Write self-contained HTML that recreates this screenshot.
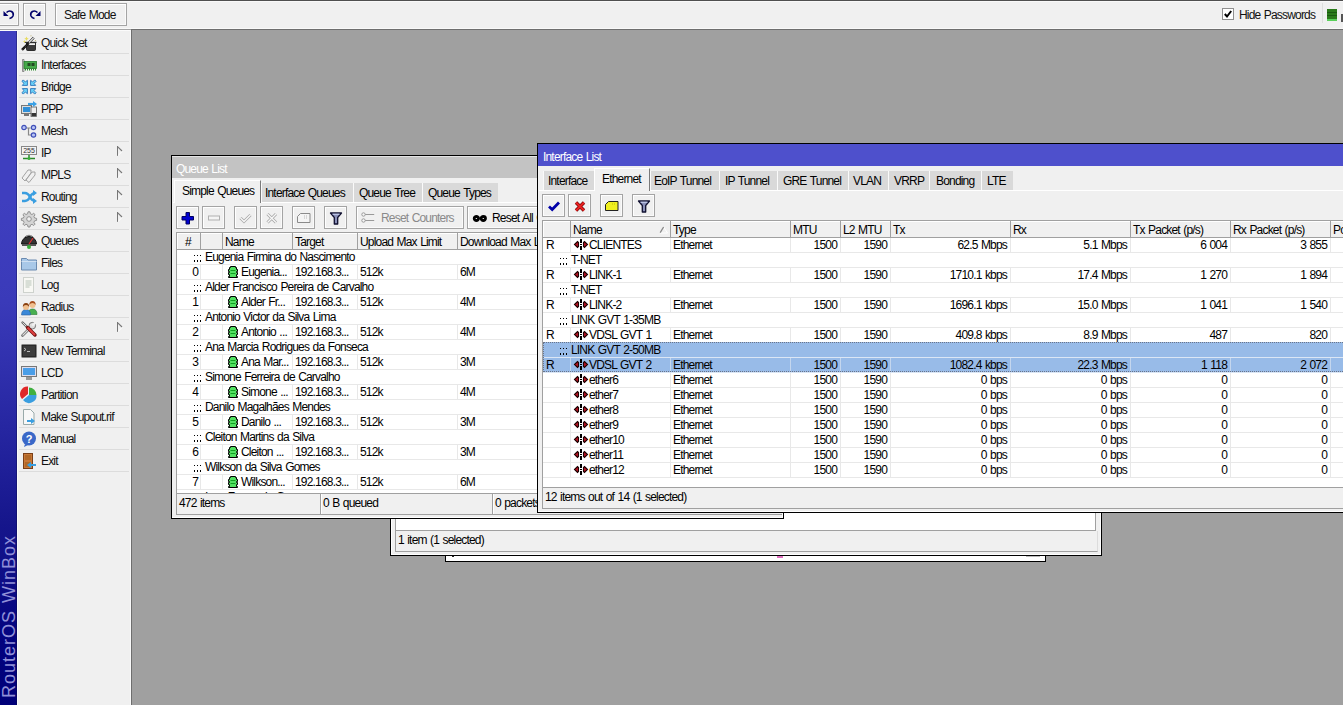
<!DOCTYPE html><html><head><meta charset="utf-8"><style>
*{margin:0;padding:0;box-sizing:border-box}
html,body{width:1343px;height:705px;overflow:hidden;background:#a0a0a0;position:relative}
body>div,body>span,body>svg,.w>div,.w>span,.w>svg{position:absolute}
.t{position:absolute;font-family:"Liberation Sans",sans-serif;font-size:12px;letter-spacing:-0.82px;word-spacing:0.9px;line-height:14px;white-space:nowrap;color:#000}
svg{position:absolute;overflow:visible}
</style></head><body><div style="left:0px;top:0px;width:1343px;height:30px;background:#f0f0f0;border-top:1px solid #4f4f4f;"></div>
<div style="left:0px;top:1px;width:1343px;height:1px;background:#f9f9f9"></div>
<div style="left:0px;top:28px;width:1343px;height:1px;background:#f9f9f9"></div>
<div style="left:0px;top:29px;width:131px;height:1px;background:#a5a5a5"></div>
<div style="left:131px;top:29px;width:1212px;height:1px;background:#6e6e6e"></div>
<div style="left:-4px;top:3px;width:23px;height:23px;border:1px solid #a4a4a4;background:#f0f0f0;box-shadow:inset 1px 1px 0 #fff,inset -1px -1px 0 #fafafa;"></div>
<div style="left:23px;top:3px;width:23px;height:23px;border:1px solid #a4a4a4;background:#f0f0f0;box-shadow:inset 1px 1px 0 #fff,inset -1px -1px 0 #fafafa;"></div>
<div style="left:55px;top:3px;width:72px;height:23px;border:1px solid #a4a4a4;background:#f0f0f0;box-shadow:inset 1px 1px 0 #fff,inset -1px -1px 0 #fafafa;"></div>
<svg style="left:3px;top:9px" width="12" height="11" viewBox="0 0 12 11"><path d="M3.5 3.5 Q6 1.2 8.6 2.5 Q11 4 10 7 Q9 9 6.5 9.5" fill="none" stroke="#00006a" stroke-width="1.6"/><path d="M0.5 2 L5.5 7 L0.5 7 Z" fill="#00006a"/></svg>
<svg style="left:29px;top:9px" width="12" height="11" viewBox="0 0 12 11"><path d="M8.5 3.5 Q6 1.2 3.4 2.5 Q1 4 2 7 Q3 9 5.5 9.5" fill="none" stroke="#00006a" stroke-width="1.6"/><path d="M11.5 2 L6.5 7 L11.5 7 Z" fill="#00006a"/></svg>
<span class="t" style="left:64px;top:8px;color:#111">Safe Mode</span>
<div style="left:1222px;top:8px;width:12px;height:12px;border:1px solid #8f8f8f;background:#fff"></div>
<svg style="left:1224px;top:10px" width="8" height="8" viewBox="0 0 8 8"><path d="M0.8 4 L3 6.5 L7.2 1" fill="none" stroke="#000" stroke-width="2"/></svg>
<span class="t" style="left:1239px;top:8px;color:#111">Hide Passwords</span>
<div style="left:1322px;top:3px;width:1px;height:20px;background:#dedede"></div>
<div style="left:1327px;top:9px;width:10px;height:12px;background:#2a7a1a;border-bottom:2px solid #5ad05a"></div>
<div style="left:1327px;top:12px;width:10px;height:1px;background:#1a5a10"></div>
<div style="left:1327px;top:15px;width:10px;height:1px;background:#1a5a10"></div>
<div style="left:1341px;top:14px;width:2px;height:8px;background:#555"></div>
<div style="left:0px;top:31px;width:17px;height:674px;background:linear-gradient(to bottom,#3f3fbf 0px,#3f3fbf 169px,#3a3ab9 271px,#2f2fac 341px,#22229c 421px,#16168c 491px,#03037f 610px,#000078 674px);"></div>
<div style="left:16px;top:31px;width:1px;height:674px;background:rgba(10,10,60,0.35)"></div>
<span class="t" style="left:-72.5px;top:608px;width:162px;height:18px;font-size:18px;line-height:18px;letter-spacing:1px;color:#9090d8;transform:rotate(-90deg);transform-origin:center">RouterOS WinBox</span>
<div style="left:0px;top:30px;width:131px;height:1px;background:#fbfbfb"></div>
<div style="left:17px;top:31px;width:115px;height:674px;background:#f0f0f0;border-left:1px solid #fafafa;border-right:1px solid #6e6e6e;"></div>
<div style="left:131px;top:30px;width:1px;height:1px;background:#6e6e6e"></div>
<div style="left:130px;top:30px;width:1px;height:675px;background:#f9f9f9"></div>
<svg style="left:21px;top:35px" width="16" height="16" viewBox="0 0 16 16"><path d="M5.5 8 h9 v6.5 q0 1 -1 1 h-7 q-1 0 -1 -1z" fill="#3a3a3a" stroke="#111" stroke-width="0.8"/><rect x="6" y="8.2" width="8" height="1.8" fill="#f2f2f2"/><rect x="3.5" y="6.8" width="12" height="1.1" fill="#222"/><path d="M1 14.8 L7.8 8" stroke="#111" stroke-width="2.4"/><path d="M1 14.8 L7.8 8" stroke="#777" stroke-width="0.6" stroke-dasharray="1 1"/><path d="M8 7.5 L12.8 2.7" stroke="#222" stroke-width="2.4"/><path d="M8 7.5 L12.8 2.7" stroke="#f4f4f4" stroke-width="1.1"/><path d="M5.5 1.5 l0.7 1.5 1.5 0.7 -1.5 0.7 -0.7 1.5 -0.7 -1.5 -1.5 -0.7 1.5 -0.7z" fill="#e8dc60"/><path d="M3.5 5 l0.5 1.1 1.1 0.5 -1.1 0.5 -0.5 1.1 -0.5 -1.1 -1.1 -0.5 1.1 -0.5z" fill="#e8dc60"/><circle cx="10" cy="0.8" r="0.6" fill="#b8b070"/><circle cx="14.5" cy="5.5" r="0.6" fill="#b8b070"/></svg>
<span class="t" style="left:41px;top:36px;color:#111">Quick Set</span>
<div style="left:19px;top:53px;width:110px;height:1px;background:#dcdcdc"></div>
<svg style="left:21px;top:57px" width="16" height="16" viewBox="0 0 16 16"><path d="M1.5 2.5 h1.5 v12 h-1.5z" fill="#d8d8d8" stroke="#7a7a7a" stroke-width="0.8"/><rect x="3" y="4.5" width="12.5" height="7" fill="#46aa4a" stroke="#247a2a" stroke-width="0.8"/><rect x="6.5" y="6" width="3" height="3" fill="#234a23"/><rect x="10.5" y="6" width="3" height="3" fill="#234a23"/><path d="M4.5 11.5 v2 M6.5 11.5 v2 M8.5 11.5 v2 M10.5 11.5 v2 M12.5 11.5 v2 M14.5 11.5 v2" stroke="#2a8a2a" stroke-width="1"/></svg>
<span class="t" style="left:41px;top:58px;color:#111">Interfaces</span>
<div style="left:19px;top:75px;width:110px;height:1px;background:#dcdcdc"></div>
<svg style="left:21px;top:79px" width="16" height="16" viewBox="0 0 16 16"><g id="ba" fill="#6cd4fa" stroke="#2a72b8" stroke-width="0.9" stroke-linejoin="miter"><path d="M0.9 2.3 L2.3 0.9 L4.4 3 L6.4 1.3 V6.4 H1.3 L3 4.4 Z"/></g><use href="#ba" transform="translate(16,0) scale(-1,1)"/><use href="#ba" transform="translate(0,16) scale(1,-1)"/><use href="#ba" transform="translate(16,16) scale(-1,-1)"/></svg>
<span class="t" style="left:41px;top:80px;color:#111">Bridge</span>
<div style="left:19px;top:97px;width:110px;height:1px;background:#dcdcdc"></div>
<svg style="left:21px;top:101px" width="16" height="16" viewBox="0 0 16 16"><rect x="0.5" y="4.5" width="10" height="8" fill="#ddd" stroke="#777"/><rect x="2" y="6" width="7" height="5" fill="#2f8fd8"/><rect x="3" y="13" width="5" height="2" fill="#777"/><rect x="10" y="6" width="5.5" height="9.5" fill="#eee" stroke="#555" stroke-width="0.8"/><rect x="10.5" y="12" width="4.5" height="3" fill="#333"/><path d="M7 3 h6" stroke="#3aa0e6" stroke-width="2.2"/><path d="M12 0 L16 3 L12 6z" fill="#3aa0e6"/></svg>
<span class="t" style="left:41px;top:102px;color:#111">PPP</span>
<div style="left:19px;top:119px;width:110px;height:1px;background:#dcdcdc"></div>
<svg style="left:21px;top:123px" width="16" height="16" viewBox="0 0 16 16"><path d="M4 5 H9.5 M7.5 5 V12 H10" stroke="#888" stroke-width="1.2" fill="none"/><g fill="#b8c4f4" stroke="#4050b8" stroke-width="1.2"><circle cx="3" cy="4.5" r="2.2"/><circle cx="12.5" cy="4.5" r="2.2"/><circle cx="12.5" cy="12" r="2.2"/></g></svg>
<span class="t" style="left:41px;top:124px;color:#111">Mesh</span>
<div style="left:19px;top:141px;width:110px;height:1px;background:#dcdcdc"></div>
<svg style="left:21px;top:145px" width="16" height="16" viewBox="0 0 16 16"><rect x="0.5" y="1.5" width="15" height="8" fill="#f4f4f4" stroke="#888"/><text x="8" y="8.3" font-family="Liberation Sans" font-size="7" text-anchor="middle" fill="#333">255</text><path d="M8 10 v4 M2 13.5 h12" stroke="#2a8a2a" stroke-width="1.5"/><circle cx="8" cy="13.5" r="1.5" fill="#3ab03a"/></svg>
<span class="t" style="left:41px;top:146px;color:#111">IP</span>
<div style="left:19px;top:163px;width:110px;height:1px;background:#dcdcdc"></div>
<svg style="left:117px;top:146px" width="6" height="11" viewBox="0 0 6 11"><path d="M0.5 0 V10" stroke="#777" stroke-width="1"/><path d="M0.8 0.8 L5 5" stroke="#777" stroke-width="1.1"/><path d="M5 5.5 L1.2 9.5" stroke="#fff" stroke-width="1"/></svg>
<svg style="left:21px;top:167px" width="16" height="16" viewBox="0 0 16 16"><g fill="#f0f0f0" stroke="#9a9a9a" stroke-width="0.9"><path d="M1 11 L7 3 L10 3 L10 6 L4 14z"/><path d="M5 13 L11 5 L14 5 L14 8 L8 15.5z"/></g></svg>
<span class="t" style="left:41px;top:168px;color:#111">MPLS</span>
<div style="left:19px;top:185px;width:110px;height:1px;background:#dcdcdc"></div>
<svg style="left:117px;top:168px" width="6" height="11" viewBox="0 0 6 11"><path d="M0.5 0 V10" stroke="#777" stroke-width="1"/><path d="M0.8 0.8 L5 5" stroke="#777" stroke-width="1.1"/><path d="M5 5.5 L1.2 9.5" stroke="#fff" stroke-width="1"/></svg>
<svg style="left:21px;top:189px" width="16" height="16" viewBox="0 0 16 16"><g fill="none" stroke="#3a9ee0" stroke-width="2.4"><path d="M1 4 h3 q3 0 5 4 q2 4 5 4"/><path d="M1 12 h3 q3 0 5 -4 q2 -4 5 -4"/></g><path d="M12 1 L16 4 L12 7z M12 9 L16 12 L12 15z" fill="#3a9ee0"/></svg>
<span class="t" style="left:41px;top:190px;color:#111">Routing</span>
<div style="left:19px;top:207px;width:110px;height:1px;background:#dcdcdc"></div>
<svg style="left:117px;top:190px" width="6" height="11" viewBox="0 0 6 11"><path d="M0.5 0 V10" stroke="#777" stroke-width="1"/><path d="M0.8 0.8 L5 5" stroke="#777" stroke-width="1.1"/><path d="M5 5.5 L1.2 9.5" stroke="#fff" stroke-width="1"/></svg>
<svg style="left:21px;top:211px" width="16" height="16" viewBox="0 0 16 16"><g fill="#d4d4d4" stroke="#8a8a8a" stroke-width="0.9"><path d="M7 0.8 h2 l0.4 2 1.6 0.7 1.7 -1.2 1.4 1.4 -1.2 1.7 0.7 1.6 2 0.4 v2 l-2 0.4 -0.7 1.6 1.2 1.7 -1.4 1.4 -1.7 -1.2 -1.6 0.7 -0.4 2 h-2 l-0.4 -2 -1.6 -0.7 -1.7 1.2 -1.4 -1.4 1.2 -1.7 -0.7 -1.6 -2 -0.4 v-2 l2 -0.4 0.7 -1.6 -1.2 -1.7 1.4 -1.4 1.7 1.2 1.6 -0.7z"/></g><circle cx="8" cy="8" r="2.3" fill="#f0f0f0" stroke="#8a8a8a" stroke-width="0.9"/></svg>
<span class="t" style="left:41px;top:212px;color:#111">System</span>
<div style="left:19px;top:229px;width:110px;height:1px;background:#dcdcdc"></div>
<svg style="left:117px;top:212px" width="6" height="11" viewBox="0 0 6 11"><path d="M0.5 0 V10" stroke="#777" stroke-width="1"/><path d="M0.8 0.8 L5 5" stroke="#777" stroke-width="1.1"/><path d="M5 5.5 L1.2 9.5" stroke="#fff" stroke-width="1"/></svg>
<svg style="left:21px;top:233px" width="16" height="16" viewBox="0 0 16 16"><path d="M0.5 11 A7.5 7.5 0 0 1 15.5 11 Z" fill="#333" stroke="#111"/><path d="M3 5 A6 6 0 0 1 13 5" fill="none" stroke="#777" stroke-width="1"/><path d="M8 11 L12 5" stroke="#e03030" stroke-width="1.2"/><rect x="1" y="11" width="14" height="2" fill="#555"/><circle cx="8" cy="14" r="2" fill="#3ab03a"/></svg>
<span class="t" style="left:41px;top:234px;color:#111">Queues</span>
<div style="left:19px;top:251px;width:110px;height:1px;background:#dcdcdc"></div>
<svg style="left:21px;top:255px" width="16" height="16" viewBox="0 0 16 16"><path d="M0.5 3.5 h5 l1.5 1.5 h8.5 v10 h-15z" fill="#a8c8e8" stroke="#6a8ab0"/><path d="M0.5 6.5 h15" stroke="#cfe0f2"/></svg>
<span class="t" style="left:41px;top:256px;color:#111">Files</span>
<div style="left:19px;top:273px;width:110px;height:1px;background:#dcdcdc"></div>
<svg style="left:21px;top:277px" width="16" height="16" viewBox="0 0 16 16"><path d="M2.5 0.5 h10 v15 h-10z" fill="#f8f8f4" stroke="#a8b0a8" stroke-dasharray="1 1"/><path d="M4.5 4 h6 M4.5 6 h6 M4.5 8 h6 M4.5 10 h4" stroke="#b8c4b8" stroke-width="1"/></svg>
<span class="t" style="left:41px;top:278px;color:#111">Log</span>
<div style="left:19px;top:295px;width:110px;height:1px;background:#dcdcdc"></div>
<svg style="left:21px;top:299px" width="16" height="16" viewBox="0 0 16 16"><path d="M7 15.5 q0 -5.5 4.5 -5.5 q4.5 0 4.5 5.5z" fill="#48b050" stroke="#2a7a30" stroke-width="0.6"/><circle cx="11.5" cy="6" r="3" fill="#f0c090"/><path d="M8.3 6 q0 -4 3.2 -4 q3.2 0 3.2 4 q-1 -2 -3.2 -2 q-2.2 0 -3.2 2z" fill="#a85020"/><path d="M0.5 16 q0 -5.5 4.5 -5.5 q4.5 0 4.5 5.5z" fill="#3a88d8" stroke="#2a60a0" stroke-width="0.6"/><circle cx="5" cy="8" r="3" fill="#f0c090"/><path d="M1.8 8 q0 -4 3.2 -4 q3.2 0 3.2 4 q-1 -2 -3.2 -2 q-2.2 0 -3.2 2z" fill="#8a4010"/></svg>
<span class="t" style="left:41px;top:300px;color:#111">Radius</span>
<div style="left:19px;top:317px;width:110px;height:1px;background:#dcdcdc"></div>
<svg style="left:21px;top:321px" width="16" height="16" viewBox="0 0 16 16"><path d="M1.5 14.5 L8.5 7.5" stroke="#666" stroke-width="2.6" stroke-linecap="round"/><path d="M1.5 14.5 L8.5 7.5" stroke="#ddd" stroke-width="1.1"/><circle cx="11.3" cy="4.7" r="3.3" fill="#ddd" stroke="#777" stroke-width="1"/><path d="M11.3 4.7 L14.5 1.5" stroke="#f0f0f0" stroke-width="2.4"/><path d="M1.5 1.5 L7 7" stroke="#666" stroke-width="2.4" stroke-linecap="round"/><path d="M1.5 1.5 L7 7" stroke="#ddd" stroke-width="1"/><path d="M6.5 6.5 L14 14" stroke="#701010" stroke-width="3.4" stroke-linecap="round"/><path d="M6.5 6.5 L14 14" stroke="#e04040" stroke-width="2"/></svg>
<span class="t" style="left:41px;top:322px;color:#111">Tools</span>
<div style="left:19px;top:339px;width:110px;height:1px;background:#dcdcdc"></div>
<svg style="left:117px;top:322px" width="6" height="11" viewBox="0 0 6 11"><path d="M0.5 0 V10" stroke="#777" stroke-width="1"/><path d="M0.8 0.8 L5 5" stroke="#777" stroke-width="1.1"/><path d="M5 5.5 L1.2 9.5" stroke="#fff" stroke-width="1"/></svg>
<svg style="left:21px;top:343px" width="16" height="16" viewBox="0 0 16 16"><rect x="0.5" y="1.5" width="15" height="13" rx="1" fill="#2a2a2a" stroke="#888"/><rect x="2" y="3" width="12" height="10" fill="#3c3c3c"/><path d="M3 5 l2 1.5 -2 1.5 M6 8.5 h3" stroke="#ccc" stroke-width="0.9" fill="none"/></svg>
<span class="t" style="left:41px;top:344px;color:#111">New Terminal</span>
<div style="left:19px;top:361px;width:110px;height:1px;background:#dcdcdc"></div>
<svg style="left:21px;top:365px" width="16" height="16" viewBox="0 0 16 16"><rect x="0.5" y="1.5" width="15" height="10" fill="#dde" stroke="#777"/><rect x="2" y="3" width="12" height="7" fill="#4a9ee8"/><rect x="5" y="12" width="6" height="3" fill="#999"/></svg>
<span class="t" style="left:41px;top:366px;color:#111">LCD</span>
<div style="left:19px;top:383px;width:110px;height:1px;background:#dcdcdc"></div>
<svg style="left:21px;top:387px" width="16" height="16" viewBox="0 0 16 16"><path d="M8 8 L8 0.5 A7.5 7.5 0 0 1 15.5 8z" fill="#40b040"/><path d="M8 8 L15.5 8 A7.5 7.5 0 0 1 2 13z" fill="#3a9ee0"/><path d="M7 7 L1 12 A7.5 7.5 0 0 1 7 -0.5z" fill="#e02828"/></svg>
<span class="t" style="left:41px;top:388px;color:#111">Partition</span>
<div style="left:19px;top:405px;width:110px;height:1px;background:#dcdcdc"></div>
<svg style="left:21px;top:409px" width="16" height="16" viewBox="0 0 16 16"><path d="M2.5 0.5 h7 l3.5 3.5 v11.5 h-10.5z" fill="#f8f8f8" stroke="#9aa"/><path d="M6 12 h5" stroke="#3a9ee0" stroke-width="2"/><path d="M10 9 L14 12 L10 15z" fill="#3a9ee0"/></svg>
<span class="t" style="left:41px;top:410px;color:#111">Make Supout.rif</span>
<div style="left:19px;top:427px;width:110px;height:1px;background:#dcdcdc"></div>
<svg style="left:21px;top:431px" width="16" height="16" viewBox="0 0 16 16"><circle cx="8" cy="7.5" r="7" fill="#3a68c8"/><path d="M4 13 l-1 3 4 -2z" fill="#3a68c8"/><text x="8" y="11.5" font-family="Liberation Sans" font-weight="bold" font-size="11" text-anchor="middle" fill="#fff">?</text></svg>
<span class="t" style="left:41px;top:432px;color:#111">Manual</span>
<div style="left:19px;top:449px;width:110px;height:1px;background:#dcdcdc"></div>
<svg style="left:21px;top:453px" width="16" height="16" viewBox="0 0 16 16"><rect x="2.5" y="0.5" width="9" height="15" fill="#c87838" stroke="#7a4018"/><rect x="4" y="2" width="6" height="5" fill="#b06828"/><rect x="4" y="9" width="6" height="5" fill="#b06828"/><path d="M8 12 h7" stroke="#3a9ee0" stroke-width="2"/><path d="M10 9 L6 12 L10 15z" fill="#3a9ee0"/></svg>
<span class="t" style="left:41px;top:454px;color:#111">Exit</span>
<div style="left:19px;top:471px;width:110px;height:1px;background:#dcdcdc"></div>
<div style="left:445px;top:420px;width:601px;height:142px;border:1px solid #000;background:#fff"></div>
<div style="left:452px;top:556px;width:2px;height:1px;background:#222"></div>
<div style="left:777px;top:556px;width:6px;height:2px;background:#e070c0"></div>
<div style="left:1026px;top:555px;width:14px;height:2px;border:1px solid #bbb;border-top:none"></div>
<div style="left:390px;top:400px;width:712px;height:156px;border:1px solid #000;background:#f0f0f0;box-shadow:inset 1px 0 0 #fff,inset -1px -1px 0 #fff"></div>
<div style="left:395px;top:400px;width:701px;height:131px;background:#fff;border-left:1px solid #a0a0a0;border-right:1px solid #a0a0a0;border-bottom:1px solid #a0a0a0"></div>
<div style="left:395px;top:531px;width:703px;height:21px;border-right:1px solid #dcdcdc;border-bottom:1px solid #a0a0a0;border-left:1px solid #a0a0a0"></div>
<span class="t" style="left:398px;top:533px;">1 item (1 selected)</span>
<div class="w" style="left:0;top:0;width:1343px;height:705px;clip-path:inset(155px 559px 186px 171px)">
<div style="left:171px;top:155px;width:613px;height:364px;border:1px solid #000;background:#f0f0f0;box-shadow:inset -1px -1px 0 #fff"></div>
<div style="left:172px;top:156px;width:611px;height:1px;background:#e4e4e4"></div>
<div style="left:172px;top:157px;width:611px;height:21px;background:#c3c3c3"></div>
<span class="t" style="left:176px;top:162px;color:#fff">Queue List</span>
<div style="left:173px;top:202px;width:609px;height:1px;background:#fff"></div>
<div style="left:174px;top:180px;width:87px;height:23px;background:#f0f0f0;border-top:1px solid #fff;border-left:1px solid #fff;border-right:1px solid #7a7a7a"></div>
<span class="t" style="left:182px;top:184px;">Simple Queues</span>
<div style="left:261px;top:183px;width:92px;height:19px;background:#d9d9d9;border-left:1px solid #fafafa"></div>
<span class="t" style="left:265px;top:186px;">Interface Queues</span>
<div style="left:353px;top:183px;width:69px;height:19px;background:#d9d9d9;border-left:1px solid #fafafa"></div>
<span class="t" style="left:359px;top:186px;">Queue Tree</span>
<div style="left:422px;top:183px;width:76px;height:19px;background:#d9d9d9;border-left:1px solid #fafafa"></div>
<span class="t" style="left:428px;top:186px;">Queue Types</span>
<div style="left:176px;top:206px;width:23px;height:23px;border:1px solid #a4a4a4;background:#f0f0f0;box-shadow:inset 1px 1px 0 #fff,inset -1px -1px 0 #fafafa;"></div>
<svg style="left:180px;top:210px" width="16" height="16" viewBox="0 0 16 16"><path d="M6 2.5 h3.5 v4 h4 v3.5 h-4 v4 h-3.5 v-4 h-4 v-3.5 h4z" fill="#0000d0" stroke="#000060" stroke-width="1"/></svg>
<div style="left:202px;top:206px;width:23px;height:23px;border:1px solid #a4a4a4;background:#f0f0f0;box-shadow:inset 1px 1px 0 #fff,inset -1px -1px 0 #fafafa;"></div>
<svg style="left:206px;top:210px" width="16" height="16" viewBox="0 0 16 16"><rect x="2.5" y="6" width="11" height="4" fill="#f4f4f4" stroke="#b0b0b0"/></svg>
<div style="left:234px;top:206px;width:23px;height:23px;border:1px solid #a4a4a4;background:#f0f0f0;box-shadow:inset 1px 1px 0 #fff,inset -1px -1px 0 #fafafa;"></div>
<svg style="left:238px;top:210px" width="16" height="16" viewBox="0 0 16 16"><path d="M2.5 8 L6 11.5 L12.5 5" fill="none" stroke="#a8a8a8" stroke-width="3"/><path d="M2.5 8 L6 11.5 L12.5 5" fill="none" stroke="#f8f8f8" stroke-width="1.3"/></svg>
<div style="left:260px;top:206px;width:23px;height:23px;border:1px solid #a4a4a4;background:#f0f0f0;box-shadow:inset 1px 1px 0 #fff,inset -1px -1px 0 #fafafa;"></div>
<svg style="left:264px;top:210px" width="16" height="16" viewBox="0 0 16 16"><path d="M3.5 4 L12 12.5 M12 4 L3.5 12.5" fill="none" stroke="#a8a8a8" stroke-width="3"/><path d="M3.5 4 L12 12.5 M12 4 L3.5 12.5" fill="none" stroke="#f8f8f8" stroke-width="1.3"/></svg>
<div style="left:292px;top:206px;width:23px;height:23px;border:1px solid #a4a4a4;background:#f0f0f0;box-shadow:inset 1px 1px 0 #fff,inset -1px -1px 0 #fafafa;"></div>
<svg style="left:296px;top:210px" width="16" height="16" viewBox="0 0 16 16"><path d="M4.5 3.5 h9.5 v9 h-12.5 v-6z" fill="#f4f4f4" stroke="#8a8a8a"/><path d="M8 6 h4 M8 8 h4" stroke="#aaa" stroke-width="0.8" stroke-dasharray="1 1"/></svg>
<div style="left:324px;top:206px;width:23px;height:23px;border:1px solid #a4a4a4;background:#f0f0f0;box-shadow:inset 1px 1px 0 #fff,inset -1px -1px 0 #fafafa;"></div>
<svg style="left:328px;top:210px" width="16" height="16" viewBox="0 0 16 16"><path d="M2.5 3 h11 l-3.8 4.5 v6.5 h-3.4 v-6.5z" fill="#8a90b8" stroke="#101030" stroke-width="1.3" stroke-linejoin="round"/><path d="M4.5 4.2 h7" stroke="#d0d8f8" stroke-width="1"/></svg>
<div style="left:356px;top:206px;width:108px;height:23px;border:1px solid #a4a4a4;background:#f0f0f0;box-shadow:inset 1px 1px 0 #fff,inset -1px -1px 0 #fafafa;"></div>
<svg style="left:361px;top:212px" width="14" height="12" viewBox="0 0 14 12"><circle cx="2.5" cy="2.5" r="1.7" fill="#f8f8f8" stroke="#999"/><circle cx="2.5" cy="8.5" r="1.7" fill="#f8f8f8" stroke="#999"/><path d="M4.2 2.5 h9 M4.2 8.5 h9" stroke="#999" stroke-width="1"/></svg>
<span class="t" style="left:381px;top:211px;color:#8a8a8a">Reset Counters</span>
<div style="left:467px;top:206px;width:120px;height:23px;border:1px solid #a4a4a4;background:#f0f0f0;box-shadow:inset 1px 1px 0 #fff,inset -1px -1px 0 #fafafa;"></div>
<svg style="left:473px;top:215px" width="14" height="7" viewBox="0 0 14 7"><ellipse cx="3.4" cy="3.5" rx="2.2" ry="2" fill="none" stroke="#000" stroke-width="2.8"/><ellipse cx="10.3" cy="3.5" rx="2.2" ry="2" fill="none" stroke="#000" stroke-width="2.8"/></svg>
<span class="t" style="left:492px;top:211px;">Reset All Counters</span>
<div style="left:176px;top:232px;width:606px;height:262px;background:#fff;border-left:1px solid #a0a0a0;border-top:1px solid #a0a0a0;border-bottom:1px solid #a0a0a0"></div>
<div style="left:177px;top:233px;width:605px;height:17px;background:#f0f0f0;border-bottom:1px solid #a0a0a0;box-shadow:inset 1px 1px 0 #fff"></div>
<div style="left:200px;top:233px;width:1px;height:17px;background:#a0a0a0"></div>
<div style="left:222px;top:233px;width:1px;height:17px;background:#a0a0a0"></div>
<div style="left:292px;top:233px;width:1px;height:17px;background:#a0a0a0"></div>
<div style="left:357px;top:233px;width:1px;height:17px;background:#a0a0a0"></div>
<div style="left:457px;top:233px;width:1px;height:17px;background:#a0a0a0"></div>
<div style="left:600px;top:233px;width:1px;height:17px;background:#a0a0a0"></div>
<span class="t" style="left:185px;top:235px;">#</span>
<span class="t" style="left:225px;top:235px;">Name</span>
<span class="t" style="left:295px;top:235px;">Target</span>
<span class="t" style="left:360px;top:235px;">Upload Max Limit</span>
<span class="t" style="left:460px;top:235px;">Download Max Limit</span>
<div style="left:194px;top:255px;width:1px;height:1px;background:#000"></div>
<div style="left:194px;top:260px;width:1px;height:2px;background:#000"></div>
<div style="left:197px;top:255px;width:1px;height:1px;background:#000"></div>
<div style="left:197px;top:260px;width:1px;height:2px;background:#000"></div>
<div style="left:200px;top:255px;width:1px;height:1px;background:#000"></div>
<div style="left:200px;top:260px;width:1px;height:2px;background:#000"></div>
<span class="t" style="left:205px;top:250px;">Eugenia Firmina do Nascimento</span>
<div style="left:177px;top:264px;width:604px;height:1px;background:#e8e8e8"></div>
<span class="t" style="right:1145px;top:265px;">0</span>
<svg style="left:228px;top:266px" width="10" height="11" viewBox="0 0 10 11"><path d="M2.5 0.5 h5 v1 h1 v2 h1 v2 h-1 v1 h1 v2 h-1 v2 h1 v1 h-9 v-1 h1 v-2 h-1 v-2 h1 v-1 h-1 v-2 h1 v-2 h1z" fill="#50e060" stroke="#000" stroke-width="1"/><path d="M2.5 4.5 h5 M2.5 7.5 h5" stroke="#10a020" stroke-width="1"/></svg>
<span class="t" style="left:241px;top:265px;">Eugenia...</span>
<span class="t" style="left:295px;top:265px;">192.168.3...</span>
<span class="t" style="left:360px;top:265px;">512k</span>
<span class="t" style="left:460px;top:265px;">6M</span>
<div style="left:200px;top:265px;width:1px;height:14px;background:#e8e8e8"></div>
<div style="left:222px;top:265px;width:1px;height:14px;background:#e8e8e8"></div>
<div style="left:292px;top:265px;width:1px;height:14px;background:#e8e8e8"></div>
<div style="left:357px;top:265px;width:1px;height:14px;background:#e8e8e8"></div>
<div style="left:457px;top:265px;width:1px;height:14px;background:#e8e8e8"></div>
<div style="left:177px;top:279px;width:604px;height:1px;background:#e8e8e8"></div>
<div style="left:194px;top:285px;width:1px;height:1px;background:#000"></div>
<div style="left:194px;top:290px;width:1px;height:2px;background:#000"></div>
<div style="left:197px;top:285px;width:1px;height:1px;background:#000"></div>
<div style="left:197px;top:290px;width:1px;height:2px;background:#000"></div>
<div style="left:200px;top:285px;width:1px;height:1px;background:#000"></div>
<div style="left:200px;top:290px;width:1px;height:2px;background:#000"></div>
<span class="t" style="left:205px;top:280px;">Alder Francisco Pereira de Carvalho</span>
<div style="left:177px;top:294px;width:604px;height:1px;background:#e8e8e8"></div>
<span class="t" style="right:1145px;top:295px;">1</span>
<svg style="left:228px;top:296px" width="10" height="11" viewBox="0 0 10 11"><path d="M2.5 0.5 h5 v1 h1 v2 h1 v2 h-1 v1 h1 v2 h-1 v2 h1 v1 h-9 v-1 h1 v-2 h-1 v-2 h1 v-1 h-1 v-2 h1 v-2 h1z" fill="#50e060" stroke="#000" stroke-width="1"/><path d="M2.5 4.5 h5 M2.5 7.5 h5" stroke="#10a020" stroke-width="1"/></svg>
<span class="t" style="left:241px;top:295px;">Alder Fr...</span>
<span class="t" style="left:295px;top:295px;">192.168.3...</span>
<span class="t" style="left:360px;top:295px;">512k</span>
<span class="t" style="left:460px;top:295px;">4M</span>
<div style="left:200px;top:295px;width:1px;height:14px;background:#e8e8e8"></div>
<div style="left:222px;top:295px;width:1px;height:14px;background:#e8e8e8"></div>
<div style="left:292px;top:295px;width:1px;height:14px;background:#e8e8e8"></div>
<div style="left:357px;top:295px;width:1px;height:14px;background:#e8e8e8"></div>
<div style="left:457px;top:295px;width:1px;height:14px;background:#e8e8e8"></div>
<div style="left:177px;top:309px;width:604px;height:1px;background:#e8e8e8"></div>
<div style="left:194px;top:315px;width:1px;height:1px;background:#000"></div>
<div style="left:194px;top:320px;width:1px;height:2px;background:#000"></div>
<div style="left:197px;top:315px;width:1px;height:1px;background:#000"></div>
<div style="left:197px;top:320px;width:1px;height:2px;background:#000"></div>
<div style="left:200px;top:315px;width:1px;height:1px;background:#000"></div>
<div style="left:200px;top:320px;width:1px;height:2px;background:#000"></div>
<span class="t" style="left:205px;top:310px;">Antonio Victor da Silva Lima</span>
<div style="left:177px;top:324px;width:604px;height:1px;background:#e8e8e8"></div>
<span class="t" style="right:1145px;top:325px;">2</span>
<svg style="left:228px;top:326px" width="10" height="11" viewBox="0 0 10 11"><path d="M2.5 0.5 h5 v1 h1 v2 h1 v2 h-1 v1 h1 v2 h-1 v2 h1 v1 h-9 v-1 h1 v-2 h-1 v-2 h1 v-1 h-1 v-2 h1 v-2 h1z" fill="#50e060" stroke="#000" stroke-width="1"/><path d="M2.5 4.5 h5 M2.5 7.5 h5" stroke="#10a020" stroke-width="1"/></svg>
<span class="t" style="left:241px;top:325px;">Antonio ...</span>
<span class="t" style="left:295px;top:325px;">192.168.3...</span>
<span class="t" style="left:360px;top:325px;">512k</span>
<span class="t" style="left:460px;top:325px;">4M</span>
<div style="left:200px;top:325px;width:1px;height:14px;background:#e8e8e8"></div>
<div style="left:222px;top:325px;width:1px;height:14px;background:#e8e8e8"></div>
<div style="left:292px;top:325px;width:1px;height:14px;background:#e8e8e8"></div>
<div style="left:357px;top:325px;width:1px;height:14px;background:#e8e8e8"></div>
<div style="left:457px;top:325px;width:1px;height:14px;background:#e8e8e8"></div>
<div style="left:177px;top:339px;width:604px;height:1px;background:#e8e8e8"></div>
<div style="left:194px;top:345px;width:1px;height:1px;background:#000"></div>
<div style="left:194px;top:350px;width:1px;height:2px;background:#000"></div>
<div style="left:197px;top:345px;width:1px;height:1px;background:#000"></div>
<div style="left:197px;top:350px;width:1px;height:2px;background:#000"></div>
<div style="left:200px;top:345px;width:1px;height:1px;background:#000"></div>
<div style="left:200px;top:350px;width:1px;height:2px;background:#000"></div>
<span class="t" style="left:205px;top:340px;">Ana Marcia Rodrigues da Fonseca</span>
<div style="left:177px;top:354px;width:604px;height:1px;background:#e8e8e8"></div>
<span class="t" style="right:1145px;top:355px;">3</span>
<svg style="left:228px;top:356px" width="10" height="11" viewBox="0 0 10 11"><path d="M2.5 0.5 h5 v1 h1 v2 h1 v2 h-1 v1 h1 v2 h-1 v2 h1 v1 h-9 v-1 h1 v-2 h-1 v-2 h1 v-1 h-1 v-2 h1 v-2 h1z" fill="#50e060" stroke="#000" stroke-width="1"/><path d="M2.5 4.5 h5 M2.5 7.5 h5" stroke="#10a020" stroke-width="1"/></svg>
<span class="t" style="left:241px;top:355px;">Ana Mar...</span>
<span class="t" style="left:295px;top:355px;">192.168.3...</span>
<span class="t" style="left:360px;top:355px;">512k</span>
<span class="t" style="left:460px;top:355px;">3M</span>
<div style="left:200px;top:355px;width:1px;height:14px;background:#e8e8e8"></div>
<div style="left:222px;top:355px;width:1px;height:14px;background:#e8e8e8"></div>
<div style="left:292px;top:355px;width:1px;height:14px;background:#e8e8e8"></div>
<div style="left:357px;top:355px;width:1px;height:14px;background:#e8e8e8"></div>
<div style="left:457px;top:355px;width:1px;height:14px;background:#e8e8e8"></div>
<div style="left:177px;top:369px;width:604px;height:1px;background:#e8e8e8"></div>
<div style="left:194px;top:375px;width:1px;height:1px;background:#000"></div>
<div style="left:194px;top:380px;width:1px;height:2px;background:#000"></div>
<div style="left:197px;top:375px;width:1px;height:1px;background:#000"></div>
<div style="left:197px;top:380px;width:1px;height:2px;background:#000"></div>
<div style="left:200px;top:375px;width:1px;height:1px;background:#000"></div>
<div style="left:200px;top:380px;width:1px;height:2px;background:#000"></div>
<span class="t" style="left:205px;top:370px;">Simone Ferreira de Carvalho</span>
<div style="left:177px;top:384px;width:604px;height:1px;background:#e8e8e8"></div>
<span class="t" style="right:1145px;top:385px;">4</span>
<svg style="left:228px;top:386px" width="10" height="11" viewBox="0 0 10 11"><path d="M2.5 0.5 h5 v1 h1 v2 h1 v2 h-1 v1 h1 v2 h-1 v2 h1 v1 h-9 v-1 h1 v-2 h-1 v-2 h1 v-1 h-1 v-2 h1 v-2 h1z" fill="#50e060" stroke="#000" stroke-width="1"/><path d="M2.5 4.5 h5 M2.5 7.5 h5" stroke="#10a020" stroke-width="1"/></svg>
<span class="t" style="left:241px;top:385px;">Simone ...</span>
<span class="t" style="left:295px;top:385px;">192.168.3...</span>
<span class="t" style="left:360px;top:385px;">512k</span>
<span class="t" style="left:460px;top:385px;">4M</span>
<div style="left:200px;top:385px;width:1px;height:14px;background:#e8e8e8"></div>
<div style="left:222px;top:385px;width:1px;height:14px;background:#e8e8e8"></div>
<div style="left:292px;top:385px;width:1px;height:14px;background:#e8e8e8"></div>
<div style="left:357px;top:385px;width:1px;height:14px;background:#e8e8e8"></div>
<div style="left:457px;top:385px;width:1px;height:14px;background:#e8e8e8"></div>
<div style="left:177px;top:399px;width:604px;height:1px;background:#e8e8e8"></div>
<div style="left:194px;top:405px;width:1px;height:1px;background:#000"></div>
<div style="left:194px;top:410px;width:1px;height:2px;background:#000"></div>
<div style="left:197px;top:405px;width:1px;height:1px;background:#000"></div>
<div style="left:197px;top:410px;width:1px;height:2px;background:#000"></div>
<div style="left:200px;top:405px;width:1px;height:1px;background:#000"></div>
<div style="left:200px;top:410px;width:1px;height:2px;background:#000"></div>
<span class="t" style="left:205px;top:400px;">Danilo Magalh&atilde;es Mendes</span>
<div style="left:177px;top:414px;width:604px;height:1px;background:#e8e8e8"></div>
<span class="t" style="right:1145px;top:415px;">5</span>
<svg style="left:228px;top:416px" width="10" height="11" viewBox="0 0 10 11"><path d="M2.5 0.5 h5 v1 h1 v2 h1 v2 h-1 v1 h1 v2 h-1 v2 h1 v1 h-9 v-1 h1 v-2 h-1 v-2 h1 v-1 h-1 v-2 h1 v-2 h1z" fill="#50e060" stroke="#000" stroke-width="1"/><path d="M2.5 4.5 h5 M2.5 7.5 h5" stroke="#10a020" stroke-width="1"/></svg>
<span class="t" style="left:241px;top:415px;">Danilo ...</span>
<span class="t" style="left:295px;top:415px;">192.168.3...</span>
<span class="t" style="left:360px;top:415px;">512k</span>
<span class="t" style="left:460px;top:415px;">3M</span>
<div style="left:200px;top:415px;width:1px;height:14px;background:#e8e8e8"></div>
<div style="left:222px;top:415px;width:1px;height:14px;background:#e8e8e8"></div>
<div style="left:292px;top:415px;width:1px;height:14px;background:#e8e8e8"></div>
<div style="left:357px;top:415px;width:1px;height:14px;background:#e8e8e8"></div>
<div style="left:457px;top:415px;width:1px;height:14px;background:#e8e8e8"></div>
<div style="left:177px;top:429px;width:604px;height:1px;background:#e8e8e8"></div>
<div style="left:194px;top:435px;width:1px;height:1px;background:#000"></div>
<div style="left:194px;top:440px;width:1px;height:2px;background:#000"></div>
<div style="left:197px;top:435px;width:1px;height:1px;background:#000"></div>
<div style="left:197px;top:440px;width:1px;height:2px;background:#000"></div>
<div style="left:200px;top:435px;width:1px;height:1px;background:#000"></div>
<div style="left:200px;top:440px;width:1px;height:2px;background:#000"></div>
<span class="t" style="left:205px;top:430px;">Cleiton Martins da Silva</span>
<div style="left:177px;top:444px;width:604px;height:1px;background:#e8e8e8"></div>
<span class="t" style="right:1145px;top:445px;">6</span>
<svg style="left:228px;top:446px" width="10" height="11" viewBox="0 0 10 11"><path d="M2.5 0.5 h5 v1 h1 v2 h1 v2 h-1 v1 h1 v2 h-1 v2 h1 v1 h-9 v-1 h1 v-2 h-1 v-2 h1 v-1 h-1 v-2 h1 v-2 h1z" fill="#50e060" stroke="#000" stroke-width="1"/><path d="M2.5 4.5 h5 M2.5 7.5 h5" stroke="#10a020" stroke-width="1"/></svg>
<span class="t" style="left:241px;top:445px;">Cleiton ...</span>
<span class="t" style="left:295px;top:445px;">192.168.3...</span>
<span class="t" style="left:360px;top:445px;">512k</span>
<span class="t" style="left:460px;top:445px;">3M</span>
<div style="left:200px;top:445px;width:1px;height:14px;background:#e8e8e8"></div>
<div style="left:222px;top:445px;width:1px;height:14px;background:#e8e8e8"></div>
<div style="left:292px;top:445px;width:1px;height:14px;background:#e8e8e8"></div>
<div style="left:357px;top:445px;width:1px;height:14px;background:#e8e8e8"></div>
<div style="left:457px;top:445px;width:1px;height:14px;background:#e8e8e8"></div>
<div style="left:177px;top:459px;width:604px;height:1px;background:#e8e8e8"></div>
<div style="left:194px;top:465px;width:1px;height:1px;background:#000"></div>
<div style="left:194px;top:470px;width:1px;height:2px;background:#000"></div>
<div style="left:197px;top:465px;width:1px;height:1px;background:#000"></div>
<div style="left:197px;top:470px;width:1px;height:2px;background:#000"></div>
<div style="left:200px;top:465px;width:1px;height:1px;background:#000"></div>
<div style="left:200px;top:470px;width:1px;height:2px;background:#000"></div>
<span class="t" style="left:205px;top:460px;">Wilkson da Silva Gomes</span>
<div style="left:177px;top:474px;width:604px;height:1px;background:#e8e8e8"></div>
<span class="t" style="right:1145px;top:475px;">7</span>
<svg style="left:228px;top:476px" width="10" height="11" viewBox="0 0 10 11"><path d="M2.5 0.5 h5 v1 h1 v2 h1 v2 h-1 v1 h1 v2 h-1 v2 h1 v1 h-9 v-1 h1 v-2 h-1 v-2 h1 v-1 h-1 v-2 h1 v-2 h1z" fill="#50e060" stroke="#000" stroke-width="1"/><path d="M2.5 4.5 h5 M2.5 7.5 h5" stroke="#10a020" stroke-width="1"/></svg>
<span class="t" style="left:241px;top:475px;">Wilkson...</span>
<span class="t" style="left:295px;top:475px;">192.168.3...</span>
<span class="t" style="left:360px;top:475px;">512k</span>
<span class="t" style="left:460px;top:475px;">6M</span>
<div style="left:200px;top:475px;width:1px;height:14px;background:#e8e8e8"></div>
<div style="left:222px;top:475px;width:1px;height:14px;background:#e8e8e8"></div>
<div style="left:292px;top:475px;width:1px;height:14px;background:#e8e8e8"></div>
<div style="left:357px;top:475px;width:1px;height:14px;background:#e8e8e8"></div>
<div style="left:457px;top:475px;width:1px;height:14px;background:#e8e8e8"></div>
<div style="left:177px;top:489px;width:604px;height:1px;background:#e8e8e8"></div>
<div style="left:194px;top:495px;width:1px;height:1px;background:#000"></div>
<div style="left:194px;top:500px;width:1px;height:2px;background:#000"></div>
<div style="left:197px;top:495px;width:1px;height:1px;background:#000"></div>
<div style="left:197px;top:500px;width:1px;height:2px;background:#000"></div>
<div style="left:200px;top:495px;width:1px;height:1px;background:#000"></div>
<div style="left:200px;top:500px;width:1px;height:2px;background:#000"></div>
<span class="t" style="left:205px;top:490px;">Ivan Fernando Gomes</span>
<div style="left:176px;top:493px;width:606px;height:22px;background:#f0f0f0;border-top:1px solid #a0a0a0;border-left:1px solid #a0a0a0;border-bottom:1px solid #a0a0a0"></div>
<div style="left:320px;top:494px;width:1px;height:20px;background:#a0a0a0"></div>
<div style="left:321px;top:494px;width:1px;height:20px;background:#fff"></div>
<div style="left:492px;top:494px;width:1px;height:20px;background:#a0a0a0"></div>
<div style="left:493px;top:494px;width:1px;height:20px;background:#fff"></div>
<span class="t" style="left:179px;top:496px;">472 items</span>
<span class="t" style="left:323px;top:496px;">0 B queued</span>
<span class="t" style="left:495px;top:496px;">0 packets queued</span>
</div>
<div class="w" style="left:0;top:0;width:1343px;height:705px;clip-path:inset(143px 0px 192px 537px)">
<div style="left:537px;top:143px;width:820px;height:370px;border:1px solid #000;background:#f0f0f0;box-shadow:inset -1px -1px 0 #fff"></div>
<div style="left:538px;top:144px;width:818px;height:22px;background:#4e50cc"></div>
<span class="t" style="left:543px;top:150px;color:#fff">Interface List</span>
<div style="left:539px;top:190px;width:804px;height:1px;background:#fff"></div>
<div style="left:543px;top:171px;width:51px;height:19px;background:#d9d9d9;border-left:1px solid #fafafa"></div>
<span class="t" style="left:548px;top:174px;">Interface</span>
<div style="left:594px;top:168px;width:56px;height:23px;background:#f0f0f0;border-top:1px solid #fff;border-left:1px solid #fff;border-right:1px solid #7a7a7a"></div>
<span class="t" style="left:602px;top:172px;">Ethernet</span>
<div style="left:650px;top:171px;width:69px;height:19px;background:#d9d9d9;border-left:1px solid #fafafa"></div>
<span class="t" style="left:654px;top:174px;">EoIP Tunnel</span>
<div style="left:719px;top:171px;width:58px;height:19px;background:#d9d9d9;border-left:1px solid #fafafa"></div>
<span class="t" style="left:725px;top:174px;">IP Tunnel</span>
<div style="left:777px;top:171px;width:71px;height:19px;background:#d9d9d9;border-left:1px solid #fafafa"></div>
<span class="t" style="left:783px;top:174px;">GRE Tunnel</span>
<div style="left:848px;top:171px;width:40px;height:19px;background:#d9d9d9;border-left:1px solid #fafafa"></div>
<span class="t" style="left:853px;top:174px;">VLAN</span>
<div style="left:888px;top:171px;width:41px;height:19px;background:#d9d9d9;border-left:1px solid #fafafa"></div>
<span class="t" style="left:894px;top:174px;">VRRP</span>
<div style="left:929px;top:171px;width:52px;height:19px;background:#d9d9d9;border-left:1px solid #fafafa"></div>
<span class="t" style="left:936px;top:174px;">Bonding</span>
<div style="left:981px;top:171px;width:32px;height:19px;background:#d9d9d9;border-left:1px solid #fafafa"></div>
<span class="t" style="left:987px;top:174px;">LTE</span>
<div style="left:542px;top:194px;width:23px;height:23px;border:1px solid #a4a4a4;background:#f0f0f0;box-shadow:inset 1px 1px 0 #fff,inset -1px -1px 0 #fafafa;"></div>
<svg style="left:546px;top:198px" width="16" height="16" viewBox="0 0 16 16"><path d="M3 8.5 L6.2 11.5 L13 4.5" fill="none" stroke="#0000a8" stroke-width="2.8"/></svg>
<div style="left:568px;top:194px;width:23px;height:23px;border:1px solid #a4a4a4;background:#f0f0f0;box-shadow:inset 1px 1px 0 #fff,inset -1px -1px 0 #fafafa;"></div>
<svg style="left:572px;top:198px" width="16" height="16" viewBox="0 0 16 16"><path d="M4 4.5 L12 12.5 M12 4.5 L4 12.5" fill="none" stroke="#700" stroke-width="3.4"/><path d="M4 4.5 L12 12.5 M12 4.5 L4 12.5" fill="none" stroke="#e82020" stroke-width="2"/></svg>
<div style="left:600px;top:194px;width:23px;height:23px;border:1px solid #a4a4a4;background:#f0f0f0;box-shadow:inset 1px 1px 0 #fff,inset -1px -1px 0 #fafafa;"></div>
<svg style="left:604px;top:198px" width="16" height="16" viewBox="0 0 16 16"><path d="M4.5 3.5 h9.5 v9 h-12.5 v-6z" fill="#f0f020" stroke="#222" stroke-width="1"/><path d="M8 6 h4" stroke="#b0b000" stroke-width="0.8" stroke-dasharray="1 1"/></svg>
<div style="left:632px;top:194px;width:23px;height:23px;border:1px solid #a4a4a4;background:#f0f0f0;box-shadow:inset 1px 1px 0 #fff,inset -1px -1px 0 #fafafa;"></div>
<svg style="left:636px;top:198px" width="16" height="16" viewBox="0 0 16 16"><path d="M2.5 3 h11 l-3.8 4.5 v6.5 h-3.4 v-6.5z" fill="#8a90b8" stroke="#101030" stroke-width="1.3" stroke-linejoin="round"/><path d="M4.5 4.2 h7" stroke="#d0d8f8" stroke-width="1"/></svg>
<div style="left:542px;top:220px;width:810px;height:268px;background:#fff;border-left:1px solid #a0a0a0;border-top:1px solid #a0a0a0;border-bottom:1px solid #a0a0a0"></div>
<div style="left:543px;top:221px;width:809px;height:17px;background:#f0f0f0;border-bottom:1px solid #a0a0a0;box-shadow:inset 1px 1px 0 #fff"></div>
<div style="left:570px;top:221px;width:1px;height:16px;background:#a0a0a0"></div>
<div style="left:670px;top:221px;width:1px;height:16px;background:#a0a0a0"></div>
<div style="left:790px;top:221px;width:1px;height:16px;background:#a0a0a0"></div>
<div style="left:840px;top:221px;width:1px;height:16px;background:#a0a0a0"></div>
<div style="left:890px;top:221px;width:1px;height:16px;background:#a0a0a0"></div>
<div style="left:1010px;top:221px;width:1px;height:16px;background:#a0a0a0"></div>
<div style="left:1130px;top:221px;width:1px;height:16px;background:#a0a0a0"></div>
<div style="left:1230px;top:221px;width:1px;height:16px;background:#a0a0a0"></div>
<div style="left:1330px;top:221px;width:1px;height:16px;background:#a0a0a0"></div>
<span class="t" style="left:573px;top:223px;">Name</span>
<span class="t" style="left:673px;top:223px;">Type</span>
<span class="t" style="left:793px;top:223px;">MTU</span>
<span class="t" style="left:843px;top:223px;">L2 MTU</span>
<span class="t" style="left:893px;top:223px;">Tx</span>
<span class="t" style="left:1013px;top:223px;">Rx</span>
<span class="t" style="left:1133px;top:223px;">Tx Packet (p/s)</span>
<span class="t" style="left:1233px;top:223px;">Rx Packet (p/s)</span>
<span class="t" style="left:1333px;top:223px;">Pow</span>
<svg style="left:659px;top:226px" width="10" height="8" viewBox="0 0 10 8"><path d="M4.6 1 L8.5 7 H1.2" fill="none" stroke="#fff" stroke-width="1"/><path d="M1.2 6.6 L4.6 1" fill="none" stroke="#888" stroke-width="1.3"/></svg>
<div style="left:543px;top:342px;width:800px;height:30px;background:#98bbe8"></div>
<div style="left:543px;top:252px;width:800px;height:1px;background:#e8e8e8"></div>
<div style="left:570px;top:238px;width:1px;height:14px;background:#e8e8e8"></div>
<div style="left:670px;top:238px;width:1px;height:14px;background:#e8e8e8"></div>
<div style="left:790px;top:238px;width:1px;height:14px;background:#e8e8e8"></div>
<div style="left:840px;top:238px;width:1px;height:14px;background:#e8e8e8"></div>
<div style="left:890px;top:238px;width:1px;height:14px;background:#e8e8e8"></div>
<div style="left:1010px;top:238px;width:1px;height:14px;background:#e8e8e8"></div>
<div style="left:1130px;top:238px;width:1px;height:14px;background:#e8e8e8"></div>
<div style="left:1230px;top:238px;width:1px;height:14px;background:#e8e8e8"></div>
<div style="left:1330px;top:238px;width:1px;height:14px;background:#e8e8e8"></div>
<span class="t" style="left:546px;top:238px;">R</span>
<svg style="left:574px;top:239px" width="14" height="11" viewBox="0 0 14 11"><path d="M0.5 5.5 L3.5 2.5 L4.5 3.5 L4.5 7.5 L3.5 8.5Z" fill="#b01020" stroke="#1a0000" stroke-width="1.1"/><path d="M13.5 5.5 L10.5 2.5 L9.5 3.5 L9.5 7.5 L10.5 8.5Z" fill="#b01020" stroke="#1a0000" stroke-width="1.1"/><rect x="6" y="0" width="2" height="4" fill="#000"/><rect x="6" y="5" width="2" height="1" fill="#000"/><rect x="6" y="7" width="2" height="4" fill="#000"/></svg>
<span class="t" style="left:589px;top:238px;">CLIENTES</span>
<span class="t" style="left:673px;top:238px;">Ethernet</span>
<span class="t" style="right:506px;top:238px;">1500</span>
<span class="t" style="right:456px;top:238px;">1590</span>
<span class="t" style="right:336px;top:238px;">62.5 Mbps</span>
<span class="t" style="right:216px;top:238px;">5.1 Mbps</span>
<span class="t" style="right:116px;top:238px;">6 004</span>
<span class="t" style="right:16px;top:238px;">3 855</span>
<div style="left:543px;top:267px;width:800px;height:1px;background:#e8e8e8"></div>
<div style="left:560px;top:258px;width:1px;height:1px;background:#000"></div>
<div style="left:560px;top:263px;width:1px;height:2px;background:#000"></div>
<div style="left:563px;top:258px;width:1px;height:1px;background:#000"></div>
<div style="left:563px;top:263px;width:1px;height:2px;background:#000"></div>
<div style="left:566px;top:258px;width:1px;height:1px;background:#000"></div>
<div style="left:566px;top:263px;width:1px;height:2px;background:#000"></div>
<span class="t" style="left:571px;top:253px;">T-NET</span>
<div style="left:543px;top:282px;width:800px;height:1px;background:#e8e8e8"></div>
<div style="left:570px;top:268px;width:1px;height:14px;background:#e8e8e8"></div>
<div style="left:670px;top:268px;width:1px;height:14px;background:#e8e8e8"></div>
<div style="left:790px;top:268px;width:1px;height:14px;background:#e8e8e8"></div>
<div style="left:840px;top:268px;width:1px;height:14px;background:#e8e8e8"></div>
<div style="left:890px;top:268px;width:1px;height:14px;background:#e8e8e8"></div>
<div style="left:1010px;top:268px;width:1px;height:14px;background:#e8e8e8"></div>
<div style="left:1130px;top:268px;width:1px;height:14px;background:#e8e8e8"></div>
<div style="left:1230px;top:268px;width:1px;height:14px;background:#e8e8e8"></div>
<div style="left:1330px;top:268px;width:1px;height:14px;background:#e8e8e8"></div>
<span class="t" style="left:546px;top:268px;">R</span>
<svg style="left:574px;top:269px" width="14" height="11" viewBox="0 0 14 11"><path d="M0.5 5.5 L3.5 2.5 L4.5 3.5 L4.5 7.5 L3.5 8.5Z" fill="#b01020" stroke="#1a0000" stroke-width="1.1"/><path d="M13.5 5.5 L10.5 2.5 L9.5 3.5 L9.5 7.5 L10.5 8.5Z" fill="#b01020" stroke="#1a0000" stroke-width="1.1"/><rect x="6" y="0" width="2" height="4" fill="#000"/><rect x="6" y="5" width="2" height="1" fill="#000"/><rect x="6" y="7" width="2" height="4" fill="#000"/></svg>
<span class="t" style="left:589px;top:268px;">LINK-1</span>
<span class="t" style="left:673px;top:268px;">Ethernet</span>
<span class="t" style="right:506px;top:268px;">1500</span>
<span class="t" style="right:456px;top:268px;">1590</span>
<span class="t" style="right:336px;top:268px;">1710.1 kbps</span>
<span class="t" style="right:216px;top:268px;">17.4 Mbps</span>
<span class="t" style="right:116px;top:268px;">1 270</span>
<span class="t" style="right:16px;top:268px;">1 894</span>
<div style="left:543px;top:297px;width:800px;height:1px;background:#e8e8e8"></div>
<div style="left:560px;top:288px;width:1px;height:1px;background:#000"></div>
<div style="left:560px;top:293px;width:1px;height:2px;background:#000"></div>
<div style="left:563px;top:288px;width:1px;height:1px;background:#000"></div>
<div style="left:563px;top:293px;width:1px;height:2px;background:#000"></div>
<div style="left:566px;top:288px;width:1px;height:1px;background:#000"></div>
<div style="left:566px;top:293px;width:1px;height:2px;background:#000"></div>
<span class="t" style="left:571px;top:283px;">T-NET</span>
<div style="left:543px;top:312px;width:800px;height:1px;background:#e8e8e8"></div>
<div style="left:570px;top:298px;width:1px;height:14px;background:#e8e8e8"></div>
<div style="left:670px;top:298px;width:1px;height:14px;background:#e8e8e8"></div>
<div style="left:790px;top:298px;width:1px;height:14px;background:#e8e8e8"></div>
<div style="left:840px;top:298px;width:1px;height:14px;background:#e8e8e8"></div>
<div style="left:890px;top:298px;width:1px;height:14px;background:#e8e8e8"></div>
<div style="left:1010px;top:298px;width:1px;height:14px;background:#e8e8e8"></div>
<div style="left:1130px;top:298px;width:1px;height:14px;background:#e8e8e8"></div>
<div style="left:1230px;top:298px;width:1px;height:14px;background:#e8e8e8"></div>
<div style="left:1330px;top:298px;width:1px;height:14px;background:#e8e8e8"></div>
<span class="t" style="left:546px;top:298px;">R</span>
<svg style="left:574px;top:299px" width="14" height="11" viewBox="0 0 14 11"><path d="M0.5 5.5 L3.5 2.5 L4.5 3.5 L4.5 7.5 L3.5 8.5Z" fill="#b01020" stroke="#1a0000" stroke-width="1.1"/><path d="M13.5 5.5 L10.5 2.5 L9.5 3.5 L9.5 7.5 L10.5 8.5Z" fill="#b01020" stroke="#1a0000" stroke-width="1.1"/><rect x="6" y="0" width="2" height="4" fill="#000"/><rect x="6" y="5" width="2" height="1" fill="#000"/><rect x="6" y="7" width="2" height="4" fill="#000"/></svg>
<span class="t" style="left:589px;top:298px;">LINK-2</span>
<span class="t" style="left:673px;top:298px;">Ethernet</span>
<span class="t" style="right:506px;top:298px;">1500</span>
<span class="t" style="right:456px;top:298px;">1590</span>
<span class="t" style="right:336px;top:298px;">1696.1 kbps</span>
<span class="t" style="right:216px;top:298px;">15.0 Mbps</span>
<span class="t" style="right:116px;top:298px;">1 041</span>
<span class="t" style="right:16px;top:298px;">1 540</span>
<div style="left:543px;top:327px;width:800px;height:1px;background:#e8e8e8"></div>
<div style="left:560px;top:318px;width:1px;height:1px;background:#000"></div>
<div style="left:560px;top:323px;width:1px;height:2px;background:#000"></div>
<div style="left:563px;top:318px;width:1px;height:1px;background:#000"></div>
<div style="left:563px;top:323px;width:1px;height:2px;background:#000"></div>
<div style="left:566px;top:318px;width:1px;height:1px;background:#000"></div>
<div style="left:566px;top:323px;width:1px;height:2px;background:#000"></div>
<span class="t" style="left:571px;top:313px;">LINK GVT 1-35MB</span>
<div style="left:570px;top:328px;width:1px;height:14px;background:#e8e8e8"></div>
<div style="left:670px;top:328px;width:1px;height:14px;background:#e8e8e8"></div>
<div style="left:790px;top:328px;width:1px;height:14px;background:#e8e8e8"></div>
<div style="left:840px;top:328px;width:1px;height:14px;background:#e8e8e8"></div>
<div style="left:890px;top:328px;width:1px;height:14px;background:#e8e8e8"></div>
<div style="left:1010px;top:328px;width:1px;height:14px;background:#e8e8e8"></div>
<div style="left:1130px;top:328px;width:1px;height:14px;background:#e8e8e8"></div>
<div style="left:1230px;top:328px;width:1px;height:14px;background:#e8e8e8"></div>
<div style="left:1330px;top:328px;width:1px;height:14px;background:#e8e8e8"></div>
<span class="t" style="left:546px;top:328px;">R</span>
<svg style="left:574px;top:329px" width="14" height="11" viewBox="0 0 14 11"><path d="M0.5 5.5 L3.5 2.5 L4.5 3.5 L4.5 7.5 L3.5 8.5Z" fill="#b01020" stroke="#1a0000" stroke-width="1.1"/><path d="M13.5 5.5 L10.5 2.5 L9.5 3.5 L9.5 7.5 L10.5 8.5Z" fill="#b01020" stroke="#1a0000" stroke-width="1.1"/><rect x="6" y="0" width="2" height="4" fill="#000"/><rect x="6" y="5" width="2" height="1" fill="#000"/><rect x="6" y="7" width="2" height="4" fill="#000"/></svg>
<span class="t" style="left:589px;top:328px;">VDSL GVT 1</span>
<span class="t" style="left:673px;top:328px;">Ethernet</span>
<span class="t" style="right:506px;top:328px;">1500</span>
<span class="t" style="right:456px;top:328px;">1590</span>
<span class="t" style="right:336px;top:328px;">409.8 kbps</span>
<span class="t" style="right:216px;top:328px;">8.9 Mbps</span>
<span class="t" style="right:116px;top:328px;">487</span>
<span class="t" style="right:16px;top:328px;">820</span>
<div style="left:543px;top:357px;width:800px;height:1px;background:#dbe6f5"></div>
<div style="left:560px;top:348px;width:1px;height:1px;background:#000"></div>
<div style="left:560px;top:353px;width:1px;height:2px;background:#000"></div>
<div style="left:563px;top:348px;width:1px;height:1px;background:#000"></div>
<div style="left:563px;top:353px;width:1px;height:2px;background:#000"></div>
<div style="left:566px;top:348px;width:1px;height:1px;background:#000"></div>
<div style="left:566px;top:353px;width:1px;height:2px;background:#000"></div>
<span class="t" style="left:571px;top:343px;">LINK GVT 2-50MB</span>
<div style="left:543px;top:372px;width:800px;height:1px;background:#dbe6f5"></div>
<div style="left:570px;top:358px;width:1px;height:14px;background:#c4d6ee"></div>
<div style="left:670px;top:358px;width:1px;height:14px;background:#c4d6ee"></div>
<div style="left:790px;top:358px;width:1px;height:14px;background:#c4d6ee"></div>
<div style="left:840px;top:358px;width:1px;height:14px;background:#c4d6ee"></div>
<div style="left:890px;top:358px;width:1px;height:14px;background:#c4d6ee"></div>
<div style="left:1010px;top:358px;width:1px;height:14px;background:#c4d6ee"></div>
<div style="left:1130px;top:358px;width:1px;height:14px;background:#c4d6ee"></div>
<div style="left:1230px;top:358px;width:1px;height:14px;background:#c4d6ee"></div>
<div style="left:1330px;top:358px;width:1px;height:14px;background:#c4d6ee"></div>
<span class="t" style="left:546px;top:358px;">R</span>
<svg style="left:574px;top:359px" width="14" height="11" viewBox="0 0 14 11"><path d="M0.5 5.5 L3.5 2.5 L4.5 3.5 L4.5 7.5 L3.5 8.5Z" fill="#b01020" stroke="#1a0000" stroke-width="1.1"/><path d="M13.5 5.5 L10.5 2.5 L9.5 3.5 L9.5 7.5 L10.5 8.5Z" fill="#b01020" stroke="#1a0000" stroke-width="1.1"/><rect x="6" y="0" width="2" height="4" fill="#000"/><rect x="6" y="5" width="2" height="1" fill="#000"/><rect x="6" y="7" width="2" height="4" fill="#000"/></svg>
<span class="t" style="left:589px;top:358px;">VDSL GVT 2</span>
<span class="t" style="left:673px;top:358px;">Ethernet</span>
<span class="t" style="right:506px;top:358px;">1500</span>
<span class="t" style="right:456px;top:358px;">1590</span>
<span class="t" style="right:336px;top:358px;">1082.4 kbps</span>
<span class="t" style="right:216px;top:358px;">22.3 Mbps</span>
<span class="t" style="right:116px;top:358px;">1 118</span>
<span class="t" style="right:16px;top:358px;">2 072</span>
<div style="left:543px;top:387px;width:800px;height:1px;background:#e8e8e8"></div>
<div style="left:570px;top:373px;width:1px;height:14px;background:#e8e8e8"></div>
<div style="left:670px;top:373px;width:1px;height:14px;background:#e8e8e8"></div>
<div style="left:790px;top:373px;width:1px;height:14px;background:#e8e8e8"></div>
<div style="left:840px;top:373px;width:1px;height:14px;background:#e8e8e8"></div>
<div style="left:890px;top:373px;width:1px;height:14px;background:#e8e8e8"></div>
<div style="left:1010px;top:373px;width:1px;height:14px;background:#e8e8e8"></div>
<div style="left:1130px;top:373px;width:1px;height:14px;background:#e8e8e8"></div>
<div style="left:1230px;top:373px;width:1px;height:14px;background:#e8e8e8"></div>
<div style="left:1330px;top:373px;width:1px;height:14px;background:#e8e8e8"></div>
<svg style="left:574px;top:374px" width="14" height="11" viewBox="0 0 14 11"><path d="M0.5 5.5 L3.5 2.5 L4.5 3.5 L4.5 7.5 L3.5 8.5Z" fill="#b01020" stroke="#1a0000" stroke-width="1.1"/><path d="M13.5 5.5 L10.5 2.5 L9.5 3.5 L9.5 7.5 L10.5 8.5Z" fill="#b01020" stroke="#1a0000" stroke-width="1.1"/><rect x="6" y="0" width="2" height="4" fill="#000"/><rect x="6" y="5" width="2" height="1" fill="#000"/><rect x="6" y="7" width="2" height="4" fill="#000"/></svg>
<span class="t" style="left:589px;top:373px;">ether6</span>
<span class="t" style="left:673px;top:373px;">Ethernet</span>
<span class="t" style="right:506px;top:373px;">1500</span>
<span class="t" style="right:456px;top:373px;">1590</span>
<span class="t" style="right:336px;top:373px;">0 bps</span>
<span class="t" style="right:216px;top:373px;">0 bps</span>
<span class="t" style="right:116px;top:373px;">0</span>
<span class="t" style="right:16px;top:373px;">0</span>
<div style="left:543px;top:402px;width:800px;height:1px;background:#e8e8e8"></div>
<div style="left:570px;top:388px;width:1px;height:14px;background:#e8e8e8"></div>
<div style="left:670px;top:388px;width:1px;height:14px;background:#e8e8e8"></div>
<div style="left:790px;top:388px;width:1px;height:14px;background:#e8e8e8"></div>
<div style="left:840px;top:388px;width:1px;height:14px;background:#e8e8e8"></div>
<div style="left:890px;top:388px;width:1px;height:14px;background:#e8e8e8"></div>
<div style="left:1010px;top:388px;width:1px;height:14px;background:#e8e8e8"></div>
<div style="left:1130px;top:388px;width:1px;height:14px;background:#e8e8e8"></div>
<div style="left:1230px;top:388px;width:1px;height:14px;background:#e8e8e8"></div>
<div style="left:1330px;top:388px;width:1px;height:14px;background:#e8e8e8"></div>
<svg style="left:574px;top:389px" width="14" height="11" viewBox="0 0 14 11"><path d="M0.5 5.5 L3.5 2.5 L4.5 3.5 L4.5 7.5 L3.5 8.5Z" fill="#b01020" stroke="#1a0000" stroke-width="1.1"/><path d="M13.5 5.5 L10.5 2.5 L9.5 3.5 L9.5 7.5 L10.5 8.5Z" fill="#b01020" stroke="#1a0000" stroke-width="1.1"/><rect x="6" y="0" width="2" height="4" fill="#000"/><rect x="6" y="5" width="2" height="1" fill="#000"/><rect x="6" y="7" width="2" height="4" fill="#000"/></svg>
<span class="t" style="left:589px;top:388px;">ether7</span>
<span class="t" style="left:673px;top:388px;">Ethernet</span>
<span class="t" style="right:506px;top:388px;">1500</span>
<span class="t" style="right:456px;top:388px;">1590</span>
<span class="t" style="right:336px;top:388px;">0 bps</span>
<span class="t" style="right:216px;top:388px;">0 bps</span>
<span class="t" style="right:116px;top:388px;">0</span>
<span class="t" style="right:16px;top:388px;">0</span>
<div style="left:543px;top:417px;width:800px;height:1px;background:#e8e8e8"></div>
<div style="left:570px;top:403px;width:1px;height:14px;background:#e8e8e8"></div>
<div style="left:670px;top:403px;width:1px;height:14px;background:#e8e8e8"></div>
<div style="left:790px;top:403px;width:1px;height:14px;background:#e8e8e8"></div>
<div style="left:840px;top:403px;width:1px;height:14px;background:#e8e8e8"></div>
<div style="left:890px;top:403px;width:1px;height:14px;background:#e8e8e8"></div>
<div style="left:1010px;top:403px;width:1px;height:14px;background:#e8e8e8"></div>
<div style="left:1130px;top:403px;width:1px;height:14px;background:#e8e8e8"></div>
<div style="left:1230px;top:403px;width:1px;height:14px;background:#e8e8e8"></div>
<div style="left:1330px;top:403px;width:1px;height:14px;background:#e8e8e8"></div>
<svg style="left:574px;top:404px" width="14" height="11" viewBox="0 0 14 11"><path d="M0.5 5.5 L3.5 2.5 L4.5 3.5 L4.5 7.5 L3.5 8.5Z" fill="#b01020" stroke="#1a0000" stroke-width="1.1"/><path d="M13.5 5.5 L10.5 2.5 L9.5 3.5 L9.5 7.5 L10.5 8.5Z" fill="#b01020" stroke="#1a0000" stroke-width="1.1"/><rect x="6" y="0" width="2" height="4" fill="#000"/><rect x="6" y="5" width="2" height="1" fill="#000"/><rect x="6" y="7" width="2" height="4" fill="#000"/></svg>
<span class="t" style="left:589px;top:403px;">ether8</span>
<span class="t" style="left:673px;top:403px;">Ethernet</span>
<span class="t" style="right:506px;top:403px;">1500</span>
<span class="t" style="right:456px;top:403px;">1590</span>
<span class="t" style="right:336px;top:403px;">0 bps</span>
<span class="t" style="right:216px;top:403px;">0 bps</span>
<span class="t" style="right:116px;top:403px;">0</span>
<span class="t" style="right:16px;top:403px;">0</span>
<div style="left:543px;top:432px;width:800px;height:1px;background:#e8e8e8"></div>
<div style="left:570px;top:418px;width:1px;height:14px;background:#e8e8e8"></div>
<div style="left:670px;top:418px;width:1px;height:14px;background:#e8e8e8"></div>
<div style="left:790px;top:418px;width:1px;height:14px;background:#e8e8e8"></div>
<div style="left:840px;top:418px;width:1px;height:14px;background:#e8e8e8"></div>
<div style="left:890px;top:418px;width:1px;height:14px;background:#e8e8e8"></div>
<div style="left:1010px;top:418px;width:1px;height:14px;background:#e8e8e8"></div>
<div style="left:1130px;top:418px;width:1px;height:14px;background:#e8e8e8"></div>
<div style="left:1230px;top:418px;width:1px;height:14px;background:#e8e8e8"></div>
<div style="left:1330px;top:418px;width:1px;height:14px;background:#e8e8e8"></div>
<svg style="left:574px;top:419px" width="14" height="11" viewBox="0 0 14 11"><path d="M0.5 5.5 L3.5 2.5 L4.5 3.5 L4.5 7.5 L3.5 8.5Z" fill="#b01020" stroke="#1a0000" stroke-width="1.1"/><path d="M13.5 5.5 L10.5 2.5 L9.5 3.5 L9.5 7.5 L10.5 8.5Z" fill="#b01020" stroke="#1a0000" stroke-width="1.1"/><rect x="6" y="0" width="2" height="4" fill="#000"/><rect x="6" y="5" width="2" height="1" fill="#000"/><rect x="6" y="7" width="2" height="4" fill="#000"/></svg>
<span class="t" style="left:589px;top:418px;">ether9</span>
<span class="t" style="left:673px;top:418px;">Ethernet</span>
<span class="t" style="right:506px;top:418px;">1500</span>
<span class="t" style="right:456px;top:418px;">1590</span>
<span class="t" style="right:336px;top:418px;">0 bps</span>
<span class="t" style="right:216px;top:418px;">0 bps</span>
<span class="t" style="right:116px;top:418px;">0</span>
<span class="t" style="right:16px;top:418px;">0</span>
<div style="left:543px;top:447px;width:800px;height:1px;background:#e8e8e8"></div>
<div style="left:570px;top:433px;width:1px;height:14px;background:#e8e8e8"></div>
<div style="left:670px;top:433px;width:1px;height:14px;background:#e8e8e8"></div>
<div style="left:790px;top:433px;width:1px;height:14px;background:#e8e8e8"></div>
<div style="left:840px;top:433px;width:1px;height:14px;background:#e8e8e8"></div>
<div style="left:890px;top:433px;width:1px;height:14px;background:#e8e8e8"></div>
<div style="left:1010px;top:433px;width:1px;height:14px;background:#e8e8e8"></div>
<div style="left:1130px;top:433px;width:1px;height:14px;background:#e8e8e8"></div>
<div style="left:1230px;top:433px;width:1px;height:14px;background:#e8e8e8"></div>
<div style="left:1330px;top:433px;width:1px;height:14px;background:#e8e8e8"></div>
<svg style="left:574px;top:434px" width="14" height="11" viewBox="0 0 14 11"><path d="M0.5 5.5 L3.5 2.5 L4.5 3.5 L4.5 7.5 L3.5 8.5Z" fill="#b01020" stroke="#1a0000" stroke-width="1.1"/><path d="M13.5 5.5 L10.5 2.5 L9.5 3.5 L9.5 7.5 L10.5 8.5Z" fill="#b01020" stroke="#1a0000" stroke-width="1.1"/><rect x="6" y="0" width="2" height="4" fill="#000"/><rect x="6" y="5" width="2" height="1" fill="#000"/><rect x="6" y="7" width="2" height="4" fill="#000"/></svg>
<span class="t" style="left:589px;top:433px;">ether10</span>
<span class="t" style="left:673px;top:433px;">Ethernet</span>
<span class="t" style="right:506px;top:433px;">1500</span>
<span class="t" style="right:456px;top:433px;">1590</span>
<span class="t" style="right:336px;top:433px;">0 bps</span>
<span class="t" style="right:216px;top:433px;">0 bps</span>
<span class="t" style="right:116px;top:433px;">0</span>
<span class="t" style="right:16px;top:433px;">0</span>
<div style="left:543px;top:462px;width:800px;height:1px;background:#e8e8e8"></div>
<div style="left:570px;top:448px;width:1px;height:14px;background:#e8e8e8"></div>
<div style="left:670px;top:448px;width:1px;height:14px;background:#e8e8e8"></div>
<div style="left:790px;top:448px;width:1px;height:14px;background:#e8e8e8"></div>
<div style="left:840px;top:448px;width:1px;height:14px;background:#e8e8e8"></div>
<div style="left:890px;top:448px;width:1px;height:14px;background:#e8e8e8"></div>
<div style="left:1010px;top:448px;width:1px;height:14px;background:#e8e8e8"></div>
<div style="left:1130px;top:448px;width:1px;height:14px;background:#e8e8e8"></div>
<div style="left:1230px;top:448px;width:1px;height:14px;background:#e8e8e8"></div>
<div style="left:1330px;top:448px;width:1px;height:14px;background:#e8e8e8"></div>
<svg style="left:574px;top:449px" width="14" height="11" viewBox="0 0 14 11"><path d="M0.5 5.5 L3.5 2.5 L4.5 3.5 L4.5 7.5 L3.5 8.5Z" fill="#b01020" stroke="#1a0000" stroke-width="1.1"/><path d="M13.5 5.5 L10.5 2.5 L9.5 3.5 L9.5 7.5 L10.5 8.5Z" fill="#b01020" stroke="#1a0000" stroke-width="1.1"/><rect x="6" y="0" width="2" height="4" fill="#000"/><rect x="6" y="5" width="2" height="1" fill="#000"/><rect x="6" y="7" width="2" height="4" fill="#000"/></svg>
<span class="t" style="left:589px;top:448px;">ether11</span>
<span class="t" style="left:673px;top:448px;">Ethernet</span>
<span class="t" style="right:506px;top:448px;">1500</span>
<span class="t" style="right:456px;top:448px;">1590</span>
<span class="t" style="right:336px;top:448px;">0 bps</span>
<span class="t" style="right:216px;top:448px;">0 bps</span>
<span class="t" style="right:116px;top:448px;">0</span>
<span class="t" style="right:16px;top:448px;">0</span>
<div style="left:543px;top:477px;width:800px;height:1px;background:#e8e8e8"></div>
<div style="left:570px;top:463px;width:1px;height:14px;background:#e8e8e8"></div>
<div style="left:670px;top:463px;width:1px;height:14px;background:#e8e8e8"></div>
<div style="left:790px;top:463px;width:1px;height:14px;background:#e8e8e8"></div>
<div style="left:840px;top:463px;width:1px;height:14px;background:#e8e8e8"></div>
<div style="left:890px;top:463px;width:1px;height:14px;background:#e8e8e8"></div>
<div style="left:1010px;top:463px;width:1px;height:14px;background:#e8e8e8"></div>
<div style="left:1130px;top:463px;width:1px;height:14px;background:#e8e8e8"></div>
<div style="left:1230px;top:463px;width:1px;height:14px;background:#e8e8e8"></div>
<div style="left:1330px;top:463px;width:1px;height:14px;background:#e8e8e8"></div>
<svg style="left:574px;top:464px" width="14" height="11" viewBox="0 0 14 11"><path d="M0.5 5.5 L3.5 2.5 L4.5 3.5 L4.5 7.5 L3.5 8.5Z" fill="#b01020" stroke="#1a0000" stroke-width="1.1"/><path d="M13.5 5.5 L10.5 2.5 L9.5 3.5 L9.5 7.5 L10.5 8.5Z" fill="#b01020" stroke="#1a0000" stroke-width="1.1"/><rect x="6" y="0" width="2" height="4" fill="#000"/><rect x="6" y="5" width="2" height="1" fill="#000"/><rect x="6" y="7" width="2" height="4" fill="#000"/></svg>
<span class="t" style="left:589px;top:463px;">ether12</span>
<span class="t" style="left:673px;top:463px;">Ethernet</span>
<span class="t" style="right:506px;top:463px;">1500</span>
<span class="t" style="right:456px;top:463px;">1590</span>
<span class="t" style="right:336px;top:463px;">0 bps</span>
<span class="t" style="right:216px;top:463px;">0 bps</span>
<span class="t" style="right:116px;top:463px;">0</span>
<span class="t" style="right:16px;top:463px;">0</span>
<div style="left:543px;top:342px;width:810px;height:30px;border:1px dotted #6a7488;border-right:none"></div>
<div style="left:542px;top:488px;width:810px;height:21px;background:#f0f0f0;border-left:1px solid #a0a0a0;border-bottom:1px solid #a0a0a0"></div>
<span class="t" style="left:545px;top:490px;">12 items out of 14 (1 selected)</span>
</div></body></html>
